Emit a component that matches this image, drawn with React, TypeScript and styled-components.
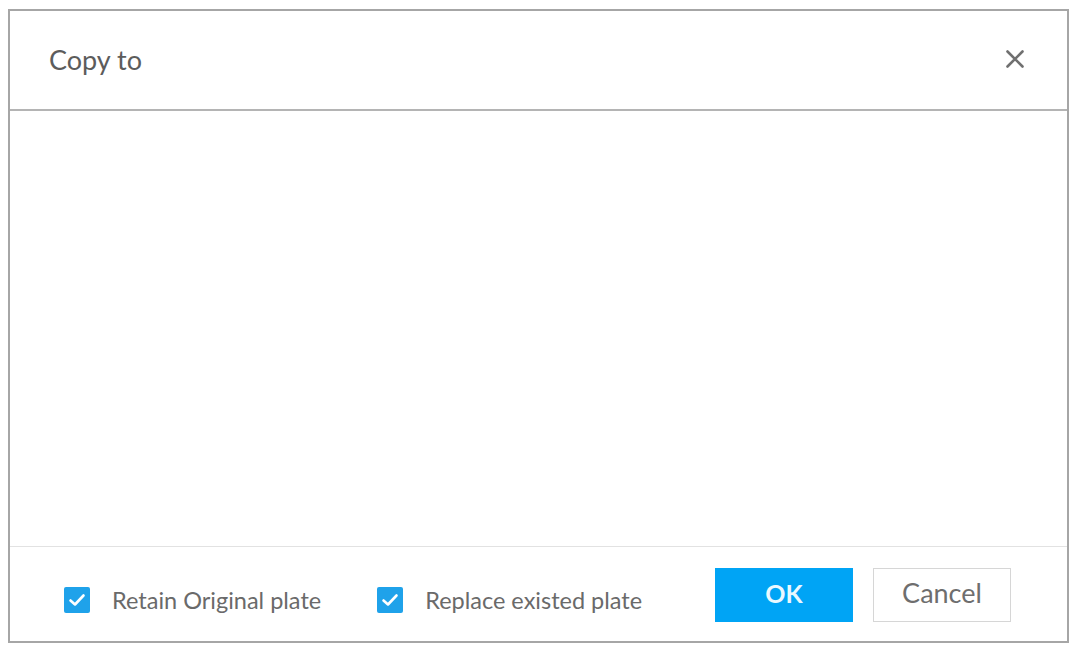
import React from "react";
import styled, { createGlobalStyle } from "styled-components";

const GlobalStyle = createGlobalStyle`
  html, body {
    margin: 0;
    padding: 0;
    background: #fff;
    font-family: Lato, "Open Sans", "Liberation Sans", sans-serif;
  }
`;

interface ICheckOptionProps {
  label: string;
}

function CheckOption({ label }: ICheckOptionProps) {
  return (
    <Option>
      <CheckBox>
        <svg width="20" height="20" viewBox="0 0 20 20">
          <path
            d="M3.5 10.5 L8 14.5 L16.5 5.5"
            fill="none"
            stroke="#fff"
            strokeWidth="2.6"
            strokeLinecap="round"
            strokeLinejoin="round"
          />
        </svg>
      </CheckBox>
      <OptionLabel>{label}</OptionLabel>
    </Option>
  );
}

export default function App() {
  return (
    <Page>
      <GlobalStyle />
      <Dialog>
        <Header>
          <Title>Copy to</Title>
          <CloseButton aria-label="close">
            <svg width="22" height="22" viewBox="0 0 22 22">
              <path
                d="M3.5 3.5 L18.5 18.5 M18.5 3.5 L3.5 18.5"
                stroke="#707070"
                strokeWidth="2.6"
                strokeLinecap="round"
              />
            </svg>
          </CloseButton>
        </Header>
        <Body />
        <Footer>
          <Options>
            <CheckOption label="Retain Original plate" />
            <CheckOption label="Replace existed plate" />
          </Options>
          <Buttons>
            <PrimaryButton>OK</PrimaryButton>
            <SecondaryButton>Cancel</SecondaryButton>
          </Buttons>
        </Footer>
      </Dialog>
    </Page>
  );
}

const Page = styled.div`
  width: 1076px;
  height: 648px;
  padding: 9px 0 0 8px;
  box-sizing: border-box;
`;

const Dialog = styled.div`
  width: 1061px;
  height: 634px;
  box-sizing: border-box;
  border: 2px solid #a6a6a6;
  display: flex;
  flex-direction: column;
  background: #fff;
`;

const Header = styled.div`
  height: 100px;
  flex: none;
  box-sizing: border-box;
  border-bottom: 2px solid #b4b4b4;
  display: flex;
  align-items: center;
  justify-content: space-between;
  padding: 0 41px 0 39px;
`;

const Title = styled.div`
  font-size: 27px;
  color: #5c5c5c;
  margin-top: -2px;
`;

const CloseButton = styled.div`
  display: flex;
  align-items: center;
  justify-content: center;
  margin-top: -2px;
`;

const Body = styled.div`
  flex: 1;
`;

const Footer = styled.div`
  height: 95px;
  flex: none;
  box-sizing: border-box;
  border-top: 1px solid #e2e2e2;
  display: flex;
  align-items: center;
  justify-content: space-between;
  padding: 0 56px 0 54px;
`;

const Options = styled.div`
  display: flex;
  align-items: center;
  gap: 56px;
  margin-top: 12px;
`;

const Option = styled.label`
  display: flex;
  align-items: center;
  gap: 22px;
`;

const CheckBox = styled.span`
  width: 26px;
  height: 26px;
  border-radius: 2px;
  background: #1fa2ea;
  display: flex;
  align-items: center;
  justify-content: center;
`;

const OptionLabel = styled.span`
  font-size: 23.5px;
  color: #6a6a6a;
`;

const Buttons = styled.div`
  display: flex;
  gap: 20px;
  margin-top: 1px;
`;

const ButtonBase = styled.button`
  width: 138px;
  height: 54px;
  font-family: Lato, "Open Sans", "Liberation Sans", sans-serif;
  box-sizing: border-box;
  cursor: pointer;
  padding: 0 0 4px;
`;

const PrimaryButton = styled(ButtonBase)`
  background: #00a4f5;
  color: #eaf8ff;
  border: none;
  font-size: 25px;
  font-weight: 700;
`;

const SecondaryButton = styled(ButtonBase)`
  background: #fff;
  color: #6e6e6e;
  border: 1px solid #d6d6d6;
  font-size: 27px;
`;
